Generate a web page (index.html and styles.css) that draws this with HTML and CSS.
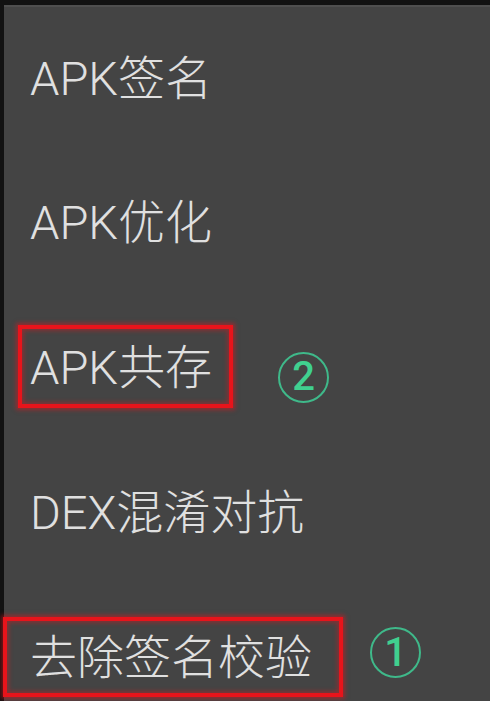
FILE: index.html
```html
<!DOCTYPE html>
<html lang="zh-CN">
<head>
<meta charset="utf-8">
<title>菜单</title>
<link rel="stylesheet" href="styles.css">
</head>
<body>
<div class="panel">
  <ul class="menu">
    <li class="item"><span class="label">APK签名</span></li>
    <li class="item"><span class="label">APK优化</span></li>
    <li class="item"><span class="label box box-a">APK共存</span><span class="mark mark-2">2</span></li>
    <li class="item"><span class="label">DEX混淆对抗</span></li>
    <li class="item"><span class="label box box-b">去除签名校验</span><span class="mark mark-1">1</span></li>
  </ul>
</div>
</body>
</html>
```
FILE: styles.css
```css
html, body {
  margin: 0;
  padding: 0;
  background: #121212;
  height: 100%;
  overflow: hidden;
}
body {
  font-family: Roboto, "Noto Sans CJK SC", sans-serif;
}
.panel {
  margin: 5px 0 0 4px;
  background: #444444;
  border-top: 2px solid #4f4f4f;
  height: 700px;
}
.menu {
  list-style: none;
  margin: 0;
  padding: 0;
}
.item {
  height: 145px;
  display: flex;
  align-items: center;
  padding-left: 26px;
  box-sizing: border-box;
}
.item:first-child {
  height: 143px;
}
.label {
  font-size: 47px;
  line-height: 47px;
  font-weight: 300;
  color: #e0e0e0;
  white-space: nowrap;
}
.box {
  border: 4px solid #e8141b;
  box-shadow: 0 0 4px 2px rgba(232, 20, 27, 0.5), inset 0 0 4px 2px rgba(232, 20, 27, 0.4);
}
.box-a {
  padding: 15px 17px 13px 8px;
  margin: -19px -21px -17px -12px;
}
.box-b {
  padding: 13px 27px 12px 23px;
  margin: -17px -31px -16px -27px;
}
.mark {
  box-sizing: border-box;
  width: 51px;
  height: 51px;
  border: 2px solid #3fb98a;
  border-radius: 50%;
  display: flex;
  align-items: center;
  justify-content: center;
  color: #40d08f;
  font-family: Roboto, sans-serif;
  font-weight: 500;
  font-size: 40px;
  line-height: 1;
}
.mark-2 {
  margin-left: 66px;
  margin-top: 19px;
}
.mark-1 {
  margin-left: 58px;
  margin-bottom: 10px;
}
```
